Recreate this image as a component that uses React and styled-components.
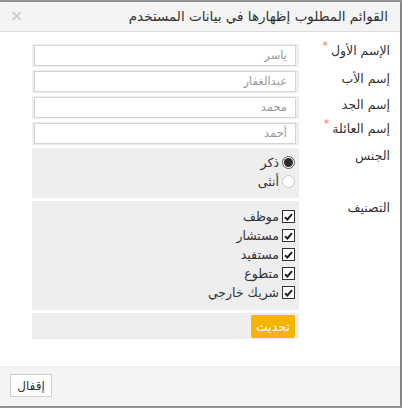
import React from "react";
import styled, { createGlobalStyle } from "styled-components";

const Global = createGlobalStyle`
  html, body { margin: 0; padding: 0; }
  body {
    background: #9a9a9a;
    width: 402px;
    height: 408px;
    overflow: hidden;
    font-family: "DejaVu Sans", "Noto Sans", sans-serif;
    line-height: 15px;
  }
`;

const Modal = styled.div`
  direction: rtl;
  margin-top: 2px;
  width: 400px;
  height: 404px;
  background: #fff;
  display: flex;
  flex-direction: column;
  box-shadow: 1px 0 2px rgba(0,0,0,0.25);
`;

const Header = styled.div`
  height: 30px;
  box-sizing: border-box;
  background: #f4f4f4;
  border-bottom: 1px solid #dcdcdc;
  display: flex;
  align-items: center;
  justify-content: space-between;
  padding: 0 12px 0 10px;
`;

const Title = styled.div`
  font-size: 13.5px;
  color: #333;
`;

const Close = styled.span`
  color: #c4c4c4;
  font-size: 16px;
  margin-top: -2px;
`;

const Body = styled.div`
  flex: 1;
  padding: 12px 10px 0 0;
  display: grid;
  grid-template-columns: 91px 267px;
  grid-auto-rows: min-content;
  row-gap: 3px;
`;

const Label = styled.div`
  font-size: 12.5px;
  line-height: 15px;
  color: #333;
  margin-top: ${p => p.$top}px;
  display: flex;
  align-items: flex-start;
  gap: 3px;
`;

const Star = styled.span`
  color: #e9795e;
  font-size: 11px;
  line-height: 1;
  margin-top: -3px;
`;

const FieldWrap = styled.div`
  background: #eeeeee;
  padding: 1px 3px 1px 2px;
`;

const Input = styled.div`
  height: 21px;
  box-sizing: border-box;
  border: 1px solid #d4d4d4;
  background: #fff;
  font-size: 11.5px;
  color: #999;
  display: flex;
  align-items: center;
  padding: 0 8px;
`;

const Box = styled.div`
  background: #eeeeee;
  padding: ${p => p.$pad};
  display: flex;
  flex-direction: column;
`;

const Option = styled.label`
  height: 19px;
  display: flex;
  align-items: center;
  gap: 3px;
  font-size: 12.5px;
  color: #333;
`;

const Radio = styled.span`
  width: 13px;
  height: 13px;
  border-radius: 50%;
  box-sizing: border-box;
  border: 1px solid ${p => (p.$on ? "#555" : "#c8c8c8")};
  background: #fff;
  display: flex;
  align-items: center;
  justify-content: center;
  &::after {
    content: "";
    width: 9px;
    height: 9px;
    border-radius: 50%;
    background: ${p => (p.$on ? "#2a2a2a" : "transparent")};
  }
`;

const Check = styled.span`
  width: 13px;
  height: 13px;
  box-sizing: border-box;
  border: 1.5px solid #333;
  background: #fff;
  display: flex;
  align-items: center;
  justify-content: center;
`;

const ActionBox = styled.div`
  background: #eeeeee;
  padding: 2px 4px 1px;
  display: flex;
`;

const Update = styled.button`
  height: 23px;
  width: 44px;
  border: none;
  border-radius: 2px;
  background: #f5b400;
  color: #fff;
  font-family: inherit;
  font-size: 12.5px;
  padding: 0;
`;

const Footer = styled.div`
  height: 40px;
  box-sizing: border-box;
  background: #f4f4f4;
  border-top: 1px solid #ececec;
  padding: 7px 10px 0;
  display: flex;
  justify-content: flex-end;
  align-items: flex-start;
`;

const CloseBtn = styled.button`
  height: 23px;
  width: 42px;
  box-sizing: border-box;
  border: 1px solid #cfcfcf;
  background: #fff;
  font-family: inherit;
  font-size: 12px;
  color: #333;
  padding: 0;
`;

const Tick = () => (
  <svg width="9" height="8" viewBox="0 0 9 8">
    <path d="M1 4.2 L3.4 6.5 L8 1.2" fill="none" stroke="#222" strokeWidth="2" />
  </svg>
);

const fields = [
  { label: "الإسم الأول", req: true, value: "ياسر", top: -1 },
  { label: "إسم الأب", value: "عبدالغفار", top: 1 },
  { label: "إسم الجد", value: "محمد", top: 1 },
  { label: "إسم العائلة", req: true, value: "أحمد", top: -1 },
];

const cats = ["موظف", "مستشار", "مستفيد", "متطوع", "شريك خارجي"];

export default function App() {
  return (
    <>
      <Global />
      <Modal>
        <Header>
          <Title>القوائم المطلوب إظهارها في بيانات المستخدم</Title>
          <Close>×</Close>
        </Header>
        <Body>
          {fields.map(f => (
            <React.Fragment key={f.label}>
              <Label $top={f.top}>
                {f.label}
                {f.req && <Star>*</Star>}
              </Label>
              <FieldWrap>
                <Input>{f.value}</Input>
              </FieldWrap>
            </React.Fragment>
          ))}
          <Label $top={0}>الجنس</Label>
          <Box $pad="5px 4px 7px">
            <Option><Radio $on />ذكر</Option>
            <Option><Radio />أنثى</Option>
          </Box>
          <Label $top={-1}>التصنيف</Label>
          <Box $pad="6px 4px 8px">
            {cats.map(c => (
              <Option key={c}><Check><Tick /></Check>{c}</Option>
            ))}
          </Box>
          <div />
          <ActionBox>
            <Update>تحديث</Update>
          </ActionBox>
        </Body>
        <Footer>
          <CloseBtn>إقفال</CloseBtn>
        </Footer>
      </Modal>
    </>
  );
}
